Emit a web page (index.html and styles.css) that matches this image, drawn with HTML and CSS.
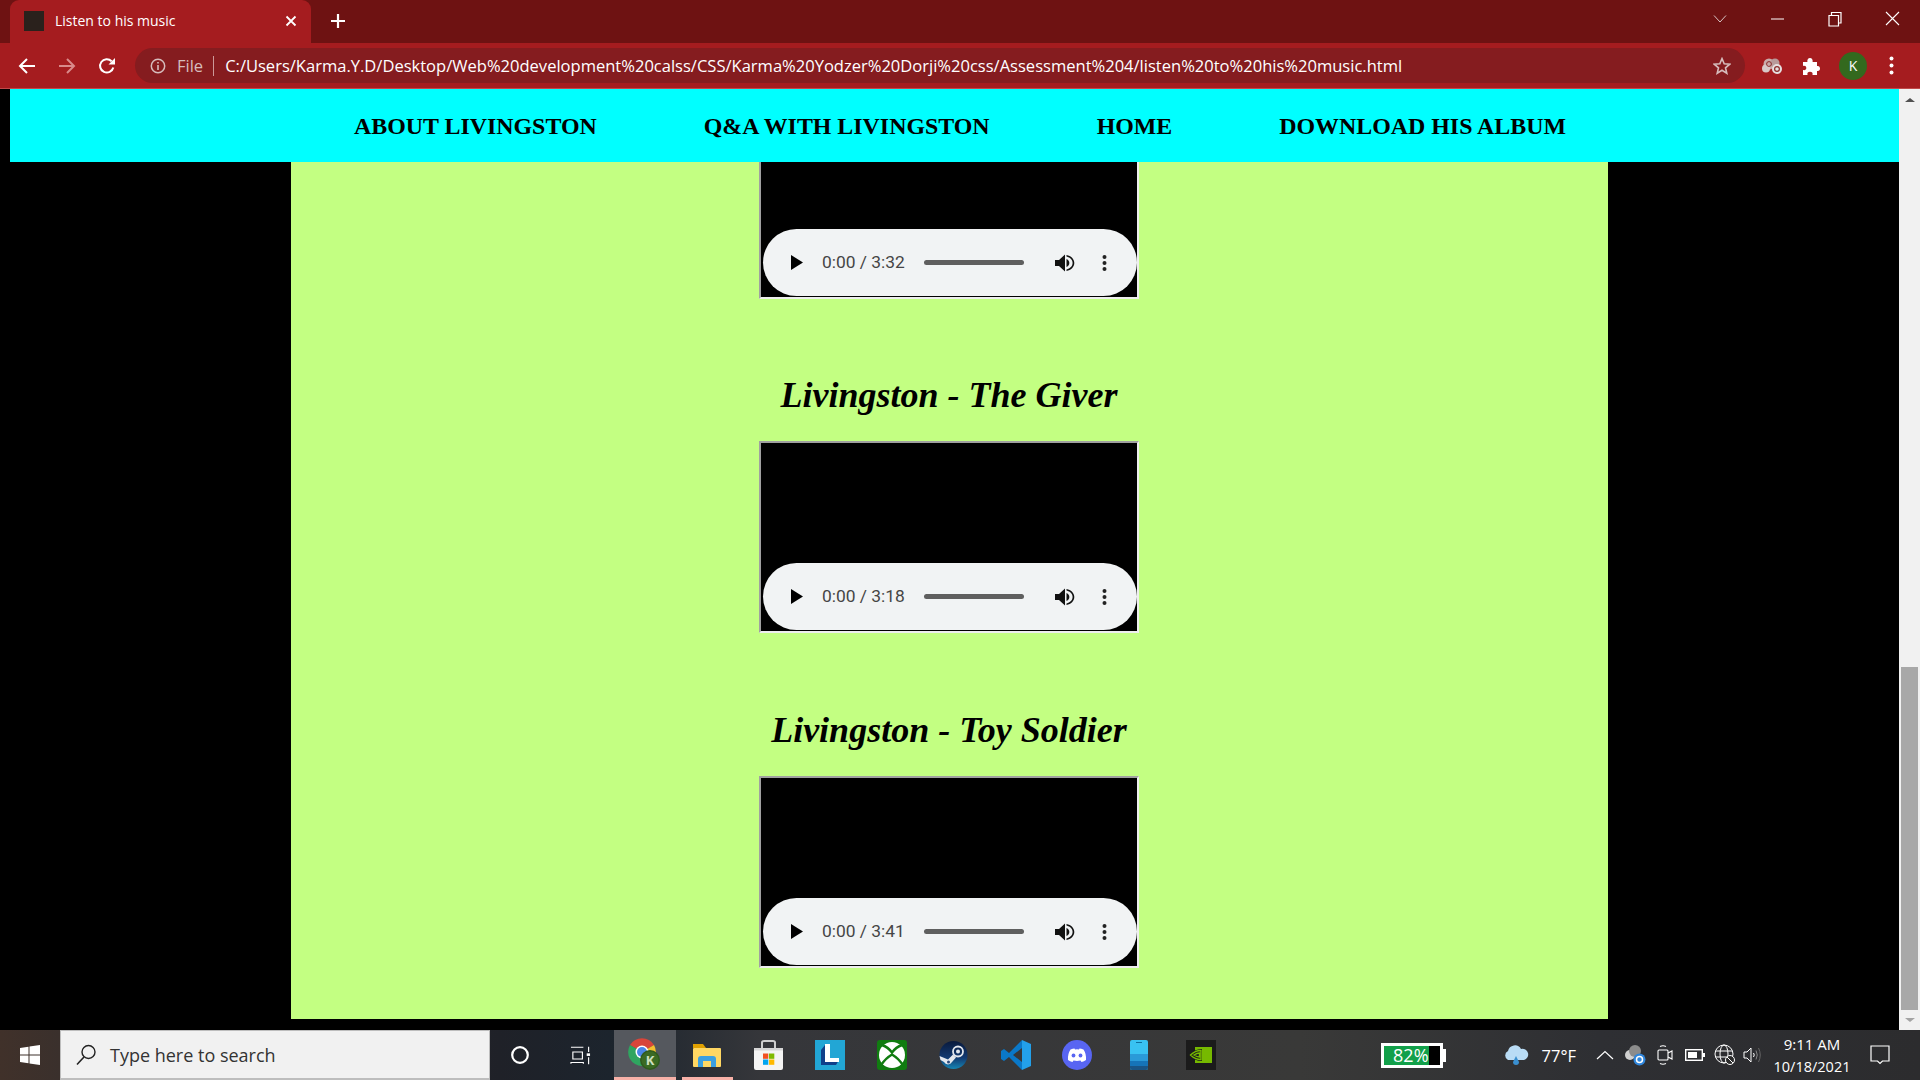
FILE: index.html
```html
<!DOCTYPE html>
<html lang="en">
<head>
  <meta charset="UTF-8">
  <meta name="viewport" content="width=device-width, initial-scale=1.0">
  <title>Listen to his music</title>
  <link rel="stylesheet" href="styles.css">
</head>
<body>
  <svg class="defs" width="0" height="0">
    <symbol id="player-play" viewBox="0 0 12 15"><path d="M0 0L12 7.5L0 15Z"/></symbol>
    <symbol id="player-volume" viewBox="0 0 20 18">
      <path d="M0 6H4L10 0.5V17.5L4 12H0Z"/>
      <path d="M11.5 5C13.5 6 14.3 7.4 14.3 9S13.5 12 11.5 13Z"/>
      <path d="M11.5 1V2.6C15.2 3.4 17.6 6 17.6 9S15.2 14.6 11.5 15.4V17C16 16.2 19.3 13 19.3 9S16 1.8 11.5 1Z"/>
    </symbol>
    <symbol id="player-more" viewBox="0 0 5 16"><circle cx="2.5" cy="2" r="2"/><circle cx="2.5" cy="8" r="2"/><circle cx="2.5" cy="14" r="2"/></symbol>
  </svg>

  <!-- browser window -->
  <header class="chrome">
    <div class="tab-strip">
      <div class="tab">
        <span class="favicon"></span>
        <span class="tab-title">Listen to his music</span>
        <svg class="tab-close" width="12" height="12" viewBox="0 0 12 12"><path d="M1.5 1.5L10.5 10.5M10.5 1.5L1.5 10.5" stroke="#fff" stroke-width="1.8"/></svg>
      </div>
      <svg class="new-tab" width="16" height="16" viewBox="0 0 16 16"><path d="M8 1V15M1 8H15" stroke="#fff" stroke-width="2.2"/></svg>
      <div class="window-controls">
        <svg width="14" height="10" viewBox="0 0 14 10"><path d="M1 1.5L7 8L13 1.5" fill="none" stroke="#d8c4c4" stroke-width="1"/></svg>
        <svg width="14" height="14" viewBox="0 0 14 14"><path d="M1 7H14" stroke="#fff" stroke-width="1"/></svg>
        <svg width="14" height="16" viewBox="0 0 14 16"><path d="M1 4.5H10.5V15H1ZM3.5 4.5V1.5H13V12H10.5" fill="none" stroke="#fff" stroke-width="1.2"/></svg>
        <svg width="15" height="15" viewBox="0 0 15 15"><path d="M1 1L14 14M14 1L1 14" stroke="#fff" stroke-width="1.1"/></svg>
      </div>
    </div>
    <div class="toolbar">
      <svg class="nav-btn" width="18" height="18" viewBox="0 0 18 18"><path d="M17 9H2.5M9 2L2 9L9 16" fill="none" stroke="#fff" stroke-width="2"/></svg>
      <svg class="nav-btn" width="18" height="18" viewBox="0 0 18 18"><path d="M1 9H15.5M9 2L16 9L9 16" fill="none" stroke="#d98a8a" stroke-width="2"/></svg>
      <svg class="nav-btn" width="18" height="18" viewBox="0 0 18 18"><path d="M15.3 10.5A6.7 6.7 0 1 1 13.6 4.2" fill="none" stroke="#fff" stroke-width="2"/><path d="M10.5 7.5H17V1Z" fill="#fff"/></svg>
      <div class="omnibox">
        <svg width="16" height="16" viewBox="0 0 16 16"><circle cx="8" cy="8" r="6.7" fill="none" stroke="#d6bcbc" stroke-width="1.5"/><path d="M8 7V12M8 4V5.6" stroke="#d6bcbc" stroke-width="1.6"/></svg>
        <span class="scheme">File</span>
        <span class="scheme-sep"></span>
        <span class="url">C:/Users/Karma.Y.D/Desktop/Web%20development%20calss/CSS/Karma%20Yodzer%20Dorji%20css/Assessment%204/listen%20to%20his%20music.html</span>
        <svg class="star" width="18" height="18" viewBox="0 0 18 18"><path d="M9 1.6L11.2 6.7L16.7 7.2L12.5 10.8L13.8 16.2L9 13.3L4.2 16.2L5.5 10.8L1.3 7.2L6.8 6.7Z" fill="none" stroke="#d6bcbc" stroke-width="1.6"/></svg>
      </div>
      <div class="toolbar-end">
        <svg width="22" height="18" viewBox="0 0 22 18"><circle cx="8" cy="7" r="5.5" fill="#c9a9a9"/><circle cx="5" cy="11.5" r="4" fill="#d8c8c8"/><circle cx="14" cy="6" r="4.5" fill="#b89a9a"/><circle cx="16" cy="12" r="5" fill="#e6e0e0"/><circle cx="16" cy="12" r="2.4" fill="none" stroke="#8a2a2a" stroke-width="1.2"/><circle cx="8" cy="7" r="2.4" fill="none" stroke="#8a2a2a" stroke-width="1"/></svg>
        <svg width="18" height="18" viewBox="0 0 18 18"><path d="M1 5H5.4C5 2.8 6 1 8 1S11 2.8 10.6 5H15V9C17 8.5 18 10 18 11.5S17 14.5 15 14V18H10.5C11 15.8 10 14.8 8 14.8S5 15.8 5.5 18H1V13C3 13.5 4.3 12.6 4.3 11S3 8.5 1 9Z" fill="#fff"/></svg>
        <span class="avatar">K</span>
        <svg class="menu-dots" width="5" height="19" viewBox="0 0 5 19"><circle cx="2.5" cy="2.5" r="2" fill="#fff"/><circle cx="2.5" cy="9.5" r="2" fill="#fff"/><circle cx="2.5" cy="16.5" r="2" fill="#fff"/></svg>
      </div>
    </div>
  </header>

  <!-- the page in the window -->
  <div class="viewport">
    <div class="page">
      <nav class="site-nav">
        <a href="#">ABOUT LIVINGSTON</a>
        <a href="#">Q&amp;A WITH LIVINGSTON</a>
        <a href="#">HOME</a>
        <a href="#">DOWNLOAD HIS ALBUM</a>
      </nav>
      <div class="scroller">
        <main class="music">
          <section class="track track-first">
            <div class="frame">
              <div class="player">
                <svg class="p-play"><use href="#player-play"/></svg>
                <span class="p-time">0:00 / 3:32</span>
                <span class="p-slider"></span>
                <svg class="p-volume"><use href="#player-volume"/></svg>
                <svg class="p-more"><use href="#player-more"/></svg>
              </div>
            </div>
          </section>
          <section class="track">
            <h2>Livingston - The Giver</h2>
            <div class="frame">
              <div class="player">
                <svg class="p-play"><use href="#player-play"/></svg>
                <span class="p-time">0:00 / 3:18</span>
                <span class="p-slider"></span>
                <svg class="p-volume"><use href="#player-volume"/></svg>
                <svg class="p-more"><use href="#player-more"/></svg>
              </div>
            </div>
          </section>
          <section class="track">
            <h2>Livingston - Toy Soldier</h2>
            <div class="frame">
              <div class="player">
                <svg class="p-play"><use href="#player-play"/></svg>
                <span class="p-time">0:00 / 3:41</span>
                <span class="p-slider"></span>
                <svg class="p-volume"><use href="#player-volume"/></svg>
                <svg class="p-more"><use href="#player-more"/></svg>
              </div>
            </div>
          </section>
        </main>
      </div>
    </div>
    <div class="scrollbar">
      <span class="arrow-up"></span>
      <div class="track-area"><span class="thumb"></span></div>
      <span class="arrow-down"></span>
    </div>
  </div>

  <!-- windows taskbar -->
  <footer class="taskbar">
    <div class="start">
      <svg width="20" height="20" viewBox="0 0 20 20" fill="#fff"><path d="M0 3L8.5 1.8V9.5H0ZM9.5 1.6L20 0V9.5H9.5ZM0 10.5H8.5V18.2L0 17ZM9.5 10.5H20V20L9.5 18.4Z"/></svg>
    </div>
    <div class="search">
      <svg width="20" height="22" viewBox="0 0 20 22"><circle cx="12.5" cy="8" r="6.5" fill="none" stroke="#222" stroke-width="1.4"/><path d="M8 13L1 20.5" stroke="#222" stroke-width="1.6"/></svg>
      <span>Type here to search</span>
    </div>
    <div class="sys-icon">
      <svg width="20" height="20" viewBox="0 0 20 20"><circle cx="10" cy="10" r="7.8" fill="none" stroke="#fff" stroke-width="2.2"/></svg>
    </div>
    <div class="sys-icon">
      <svg width="21" height="19" viewBox="0 0 22 22" preserveAspectRatio="none" fill="none" stroke="#fff" stroke-width="1.2"><path d="M1 1.5H14M3 7H13V15H3ZM1 20.5V19H14V20.5M19.5 1V7M19.5 13V21"/><rect x="17.5" y="8.5" width="3.5" height="3" fill="#fff" stroke="none"/></svg>
    </div>
    <div class="task-icon active">
      <svg width="34" height="34" viewBox="0 0 34 34">
        <path d="M14 14L2 7A14 14 0 0 1 26 7Z" fill="#d8453a"/>
        <path d="M14 14L2 7A14 14 0 0 0 14 28Z" fill="#2fa560"/>
        <path d="M14 14L26 7A14 14 0 0 1 14 28Z" fill="#f5c02e"/>
        <circle cx="14" cy="14" r="6.5" fill="#fff"/><circle cx="14" cy="14" r="5" fill="#4a86e8"/>
        <circle cx="22" cy="22" r="10" fill="#2f5a1e"/><circle cx="22" cy="22" r="8.5" fill="#3b6a24"/>
        <text class="chrome-k" x="22" y="27" text-anchor="middle">K</text>
      </svg>
    </div>
    <div class="task-icon running">
      <svg width="28" height="24" viewBox="0 0 28 24">
        <path d="M0 1H10L13 5H0Z" fill="#e0a000"/>
        <rect y="5" width="28" height="19" rx="1" fill="#ffd763"/>
        <path d="M5 24V16Q5 13 8 13H20Q23 13 23 16V24H18V18H10V24Z" fill="#3b9fe0"/>
      </svg>
    </div>
    <div class="task-icon">
      <svg width="29" height="30" viewBox="0 0 29 30">
        <path d="M8 9V2.5Q8 1 10 1H19Q21 1 21 2.5V9" fill="none" stroke="#cfcfcf" stroke-width="2"/>
        <path d="M0 8H29V28Q29 30 27 30H2Q0 30 0 28Z" fill="#f4f4f4"/><path d="M0 8H29V10.5H0Z" fill="#d6d6d6"/>
        <rect x="9" y="13.5" width="5.3" height="5.3" fill="#f25022"/><rect x="15" y="13.5" width="5.3" height="5.3" fill="#7fba00"/>
        <rect x="9" y="19.5" width="5.3" height="5.3" fill="#00a4ef"/><rect x="15" y="19.5" width="5.3" height="5.3" fill="#ffb900"/>
      </svg>
    </div>
    <div class="task-icon">
      <svg width="30" height="30" viewBox="0 0 30 30">
        <rect width="30" height="30" fill="#22a6d5"/>
        <path d="M6 10L10 5V20H24L21 25H6Z" fill="#0f3f8a"/>
        <path d="M10 4H15V18H24V22H10Z" fill="#fff"/>
      </svg>
    </div>
    <div class="task-icon">
      <svg width="30" height="30" viewBox="0 0 30 30">
        <rect width="30" height="30" rx="3" fill="#107c10"/><circle cx="15" cy="15" r="13" fill="#fff"/>
        <path d="M5 5Q11 7 15 12.5Q19 7 25 5M4 25Q9 18 15 14.5Q21 18 26 25" fill="none" stroke="#107c10" stroke-width="2.4"/>
      </svg>
    </div>
    <div class="task-icon">
      <svg width="29" height="28" viewBox="0 0 29 28">
        <defs><linearGradient id="steam-bg" x1="0" y1="0" x2="0" y2="1"><stop offset="0" stop-color="#0a1a3c"/><stop offset="0.6" stop-color="#123a72"/><stop offset="1" stop-color="#1686b4"/></linearGradient></defs>
        <circle cx="14.5" cy="14" r="14" fill="url(#steam-bg)"/>
        <circle cx="19" cy="10.5" r="5" fill="none" stroke="#e4e8ee" stroke-width="1.8"/><circle cx="19" cy="10.5" r="2" fill="#e4e8ee"/>
        <path d="M0.5 15L9 18.5L14 13.5L17 16.5L13 21A4.5 4.5 0 0 1 5 21L1.5 19Z" fill="#e4e8ee"/>
        <circle cx="9.5" cy="21" r="1.5" fill="#2a4a7a"/>
      </svg>
    </div>
    <div class="task-icon">
      <svg width="30" height="30" viewBox="0 0 30 30">
        <path d="M21 0L8 13L3 9L0 11V19L3 21L8 17L21 30V22L12 15L21 8Z" fill="#0a78c8"/>
        <path d="M21 0L30 4V26L21 30Z" fill="#23a0ea"/>
      </svg>
    </div>
    <div class="task-icon">
      <svg width="30" height="30" viewBox="0 0 30 30">
        <circle cx="15" cy="15" r="15" fill="#5865f2"/>
        <path d="M8.5 9.5Q11 8.5 12.5 8.5L13 9.5Q15 9.2 17 9.5L17.5 8.5Q19 8.5 21.5 9.5Q24.5 14 24 20Q22 21.5 19.5 22L18.5 20.5Q15 21.3 11.5 20.5L10.5 22Q8 21.5 6 20Q5.5 14 8.5 9.5Z" fill="#fff"/>
        <circle cx="11.5" cy="15.5" r="1.9" fill="#5865f2"/><circle cx="18.5" cy="15.5" r="1.9" fill="#5865f2"/>
      </svg>
    </div>
    <div class="task-icon">
      <svg width="18" height="30" viewBox="0 0 18 30">
        <rect width="18" height="30" rx="2" fill="#39c2f2"/><rect y="14" width="18" height="7" fill="#2a9ad8"/><rect y="21" width="18" height="5" fill="#1674b8"/><path d="M0 26H18V28Q18 30 16 30H2Q0 30 0 28Z" fill="#1a5484"/>
        <rect x="6" y="2" width="6" height="1" fill="#0f6fa0"/>
      </svg>
    </div>
    <div class="task-icon">
      <svg width="30" height="30" viewBox="0 0 30 30">
        <rect width="30" height="30" fill="#1b1b1b"/><rect x="9" y="7" width="17" height="16" fill="#76b900"/>
        <path d="M3 15Q8 9 16 9V21Q8 21 3 15Z" fill="#1b1b1b"/>
        <path d="M4.5 15Q9 10.5 15 10.5V19.5Q9 19.5 4.5 15ZM8 15Q11 13 13.5 13V17Q11 17 8 15Z" fill="none" stroke="#76b900" stroke-width="1.4"/>
      </svg>
    </div>

    <div class="tray">
      <div class="battery-gauge"><span class="gauge-level">82%</span></div>
      <svg class="t-weather" width="28" height="24" viewBox="0 0 28 24"><path d="M6 17A5 5 0 0 1 6 8A7 7 0 0 1 19 6A5.5 5.5 0 0 1 22 17Z" fill="#b9dcf5"/><path d="M14 13L17 19A3 3 0 0 1 11 19Z" fill="#3a8fd0"/></svg>
      <span class="temp">77°F</span>
      <svg class="t-chevron" width="18" height="10" viewBox="0 0 18 10"><path d="M1 9L9 1.5L17 9" fill="none" stroke="#fff" stroke-width="1.2"/></svg>
      <svg class="t-cloud" width="22" height="22" viewBox="0 0 22 22"><circle cx="6" cy="11" r="5" fill="#d0d0d0"/><circle cx="11" cy="7" r="6" fill="#8c8c8c"/><circle cx="15.5" cy="15.5" r="6" fill="#2f86dc"/><circle cx="15.5" cy="15.5" r="3" fill="none" stroke="#fff" stroke-width="1.5"/></svg>
      <svg class="t-meet" width="16" height="22" viewBox="0 0 16 22" fill="none" stroke="#fff" stroke-width="1.1"><rect x="1" y="6" width="10" height="10" rx="1"/><path d="M11 9L15 7V15L11 13M3 2.5Q6 1 9 2.5M3 19.5Q6 21 9 19.5"/></svg>
      <svg class="t-battery" width="20" height="12" viewBox="0 0 20 12"><rect x="0.7" y="0.7" width="16.6" height="10.6" fill="none" stroke="#fff" stroke-width="1.4"/><rect x="3" y="3" width="9" height="6" fill="#fff"/><rect x="18" y="4" width="2" height="4" fill="#fff"/></svg>
      <svg class="t-globe" width="22" height="22" viewBox="0 0 22 22" fill="none" stroke="#fff" stroke-width="1"><circle cx="10" cy="10" r="9"/><ellipse cx="10" cy="10" rx="4" ry="9"/><path d="M1.5 7H18.5M1.5 13H18.5"/><circle cx="16" cy="16" r="4.5" fill="#2b2b2b"/><path d="M13 13L19 19"/></svg>
      <svg class="t-speaker" width="20" height="18" viewBox="0 0 20 18" fill="none" stroke="#fff" stroke-width="1"><path d="M1 6H4L8 2V16L4 12H1Z"/><path d="M10.5 7Q12 9 10.5 11"/><path d="M13 4.5Q15.5 9 13 13.5" stroke="#888"/><path d="M15.5 2Q19 9 15.5 16" stroke="#666"/></svg>
      <div class="clock"><span class="clock-time">9:11 AM</span><span>10/18/2021</span></div>
      <svg class="t-notify" width="20" height="20" viewBox="0 0 20 20"><path d="M1 1H19V16H12.5L10 18.5L7.5 16H1Z" fill="none" stroke="#fff" stroke-width="1.2"/></svg>
    </div>
  </footer>
</body>
</html>
```

FILE: styles.css
```css
* {
  box-sizing: border-box;
}

html, body {
  height: 100%;
}

body {
  margin: 0;
  display: flex;
  flex-direction: column;
  height: 1080px;
  overflow: hidden;
  background-color: #000;
  font-family: "Open Sans", sans-serif;
}

.defs {
  display: none;
}

/* browser window */
.chrome {
  flex: none;
  height: 89px;
  background-color: #a51c1f;
  border-bottom: 1px solid #c04a4a;
}

.tab-strip {
  height: 43px;
  display: flex;
  align-items: center;
  background-color: #6e1212;
  padding-left: 10px;
}

.tab {
  width: 301px;
  height: 43px;
  display: flex;
  align-items: center;
  padding: 0 14px 2px 14px;
  background-color: #a51c1f;
  border-radius: 9px 9px 0 0;
}

.favicon {
  width: 20px;
  height: 20px;
  background-color: #2a211c;
}

.tab-title {
  flex: 1;
  margin-left: 11px;
  color: #fff;
  font-size: 14px;
}

.new-tab {
  margin: 0 0 2px 19px;
}

.window-controls {
  margin-left: auto;
  display: flex;
  align-items: center;
  gap: 43.5px;
  padding: 0 20px 6px 0;
}

.toolbar {
  height: 45px;
  display: flex;
  align-items: center;
  padding-left: 18px;
}

.nav-btn {
  margin-right: 22px;
}

.omnibox {
  width: 1610px;
  height: 35px;
  margin-left: -3px;
  display: flex;
  align-items: center;
  padding: 0 14px 0 15px;
  background-color: #851c1f;
  border-radius: 18px;
}

.scheme {
  margin-left: 11px;
  color: #d6bcbc;
  font-size: 16.5px;
}

.scheme-sep {
  width: 1px;
  height: 20px;
  margin: 0 11px 0 10px;
  background-color: #c99;
}

.url {
  flex: 1;
  color: #fff;
  font-size: 16.55px;
  white-space: nowrap;
}

.toolbar-end {
  display: flex;
  align-items: center;
  gap: 19px;
  margin-left: 16px;
}

.avatar {
  width: 28px;
  height: 28px;
  display: flex;
  align-items: center;
  justify-content: center;
  background-color: #33691e;
  border-radius: 50%;
  color: #fff;
  font-size: 14px;
}

.menu-dots {
  margin-left: 3px;
}

/* the page */
.viewport {
  flex: 1;
  min-height: 0;
  display: flex;
}

.page {
  flex: 1;
  min-width: 0;
  display: flex;
  flex-direction: column;
  padding-left: 10px;
}

.site-nav {
  flex: none;
  height: 73px;
  display: flex;
  align-items: center;
  justify-content: center;
  gap: 107px;
  padding: 2px 0 0 11px;
  background-color: #0ff;
}

.site-nav a {
  color: #000;
  font-family: "Liberation Serif", serif;
  font-size: 23.9px;
  font-weight: bold;
  text-decoration: none;
}

.scroller {
  flex: 1;
  min-height: 0;
  overflow: hidden;
}

.music {
  width: 1317px;
  height: 857px;
  margin-left: 281px;
  padding: 1px 1px 0 0;
  background-color: #c3ff82;
}

.track {
  margin-bottom: 57px;
  display: flex;
  flex-direction: column;
  align-items: center;
}

.track-first {
  margin-top: -56px;
  margin-bottom: 56px;
}

.track h2 {
  margin: 9px 0 15px;
  color: #000;
  font-family: "Liberation Serif", serif;
  font-size: 36px;
  font-style: italic;
  font-weight: bold;
  line-height: 62px;
}

.frame {
  width: 380px;
  height: 192px;
  display: flex;
  align-items: flex-end;
  padding: 0 0 1px 2px;
  background-color: #000;
  border: 2px solid #eee;
  border-top-color: #a0a0a0;
  border-left-color: #a0a0a0;
}

.player {
  width: 100%;
  height: 67px;
  display: flex;
  align-items: center;
  padding-left: 28px;
  background-color: #f1f3f4;
  border-radius: 34px;
}

.p-play {
  width: 12px;
  height: 15px;
  fill: #000;
}

.p-time {
  width: 102px;
  margin-left: 19px;
  padding-bottom: 1px;
  color: #454545;
  font-family: Roboto, sans-serif;
  font-size: 17.4px;
  white-space: nowrap;
}

.p-slider {
  width: 100px;
  height: 5px;
  background-color: #5f5f5f;
  border-radius: 3px;
}

.p-volume {
  width: 20px;
  height: 18px;
  margin-left: 31px;
  fill: #111;
}

.p-more {
  width: 5px;
  height: 16px;
  margin-left: 27px;
  fill: #222;
}

.scrollbar {
  flex: none;
  width: 21px;
  display: flex;
  flex-direction: column;
  align-items: center;
  background-color: #f1f1f1;
}

.arrow-up,
.arrow-down {
  flex: none;
  width: 0;
  height: 0;
  border-left: 5px solid transparent;
  border-right: 5px solid transparent;
}

.arrow-up {
  margin: 9px 0 8px;
  border-bottom: 4px solid #505050;
}

.arrow-down {
  margin: 8px 0;
  border-top: 4px solid #a3a3a3;
}

.track-area {
  flex: 1;
  width: 100%;
  display: flex;
  flex-direction: column;
  justify-content: flex-end;
  padding: 0 2px;
}

.thumb {
  height: 343px;
  background-color: #a8a8a8;
}

/* windows taskbar */
.taskbar {
  flex: none;
  height: 50px;
  display: flex;
  align-items: center;
  background: linear-gradient(90deg, #40312a 0, #3a302c 60px, #1f2128 500px, #1c242d 610px, #35363a 760px, #393938 1300px, #2e2f33 1600px, #2c2c2e 1920px);
}

.start {
  width: 60px;
  display: flex;
  justify-content: center;
}

.search {
  width: 430px;
  height: 50px;
  display: flex;
  align-items: center;
  gap: 14px;
  padding-left: 15px;
  background-color: #f1f1f1;
  border: 1px solid #bdbdbd;
  border-bottom-width: 2px;
  color: #333;
  font-size: 18px;
}

.sys-icon {
  width: 60px;
  height: 50px;
  display: flex;
  align-items: center;
  justify-content: center;
}

.sys-icon + .task-icon {
  margin-left: 4px;
}

.task-icon {
  width: 61.8px;
  height: 50px;
  display: flex;
  align-items: center;
  justify-content: center;
}

.task-icon.active {
  background-color: #55585e;
  border-bottom: 3px solid #f7b1a8;
  padding-top: 3px;
}

.task-icon.running {
  background: linear-gradient(#f7b1a8, #f7b1a8) no-repeat 6px 47px / 51px 3px;
}

.chrome-k {
  fill: #cfe0c0;
  font-family: "Open Sans", sans-serif;
  font-size: 13px;
  font-weight: bold;
}

.tray {
  margin-left: auto;
  height: 50px;
  display: flex;
  align-items: center;
  padding-right: 30px;
  color: #fff;
}

/* the little battery nub sits on the gauge's right edge */
.battery-gauge {
  position: relative;
  width: 62px;
  height: 25px;
  background-color: #000;
  border: 3px solid #fff;
}

.battery-gauge::after {
  content: "";
  position: absolute;
  top: 3px;
  right: -6px;
  width: 3px;
  height: 13px;
  background-color: #fff;
}

.gauge-level {
  display: block;
  width: 45px;
  height: 19px;
  background-color: #12a04a;
  color: #fff;
  font-size: 18px;
  line-height: 19px;
  text-align: right;
}

.t-weather {
  margin-left: 59px;
}

.temp {
  margin-left: 12px;
  font-size: 16.5px;
}

.t-chevron {
  margin-left: 20px;
}

.t-cloud {
  margin-left: 10px;
}

.t-meet {
  margin-left: 11px;
}

.t-battery {
  margin-left: 12px;
}

.t-globe {
  margin-left: 9px;
}

.t-speaker {
  margin-left: 7px;
}

.clock {
  width: 86px;
  margin-left: 6px;
  display: flex;
  flex-direction: column;
  align-items: center;
  gap: 5px;
  font-size: 14.5px;
  line-height: 18px;
}

.clock-time {
  font-size: 15px;
}

.t-notify {
  margin-left: 15px;
}
```
